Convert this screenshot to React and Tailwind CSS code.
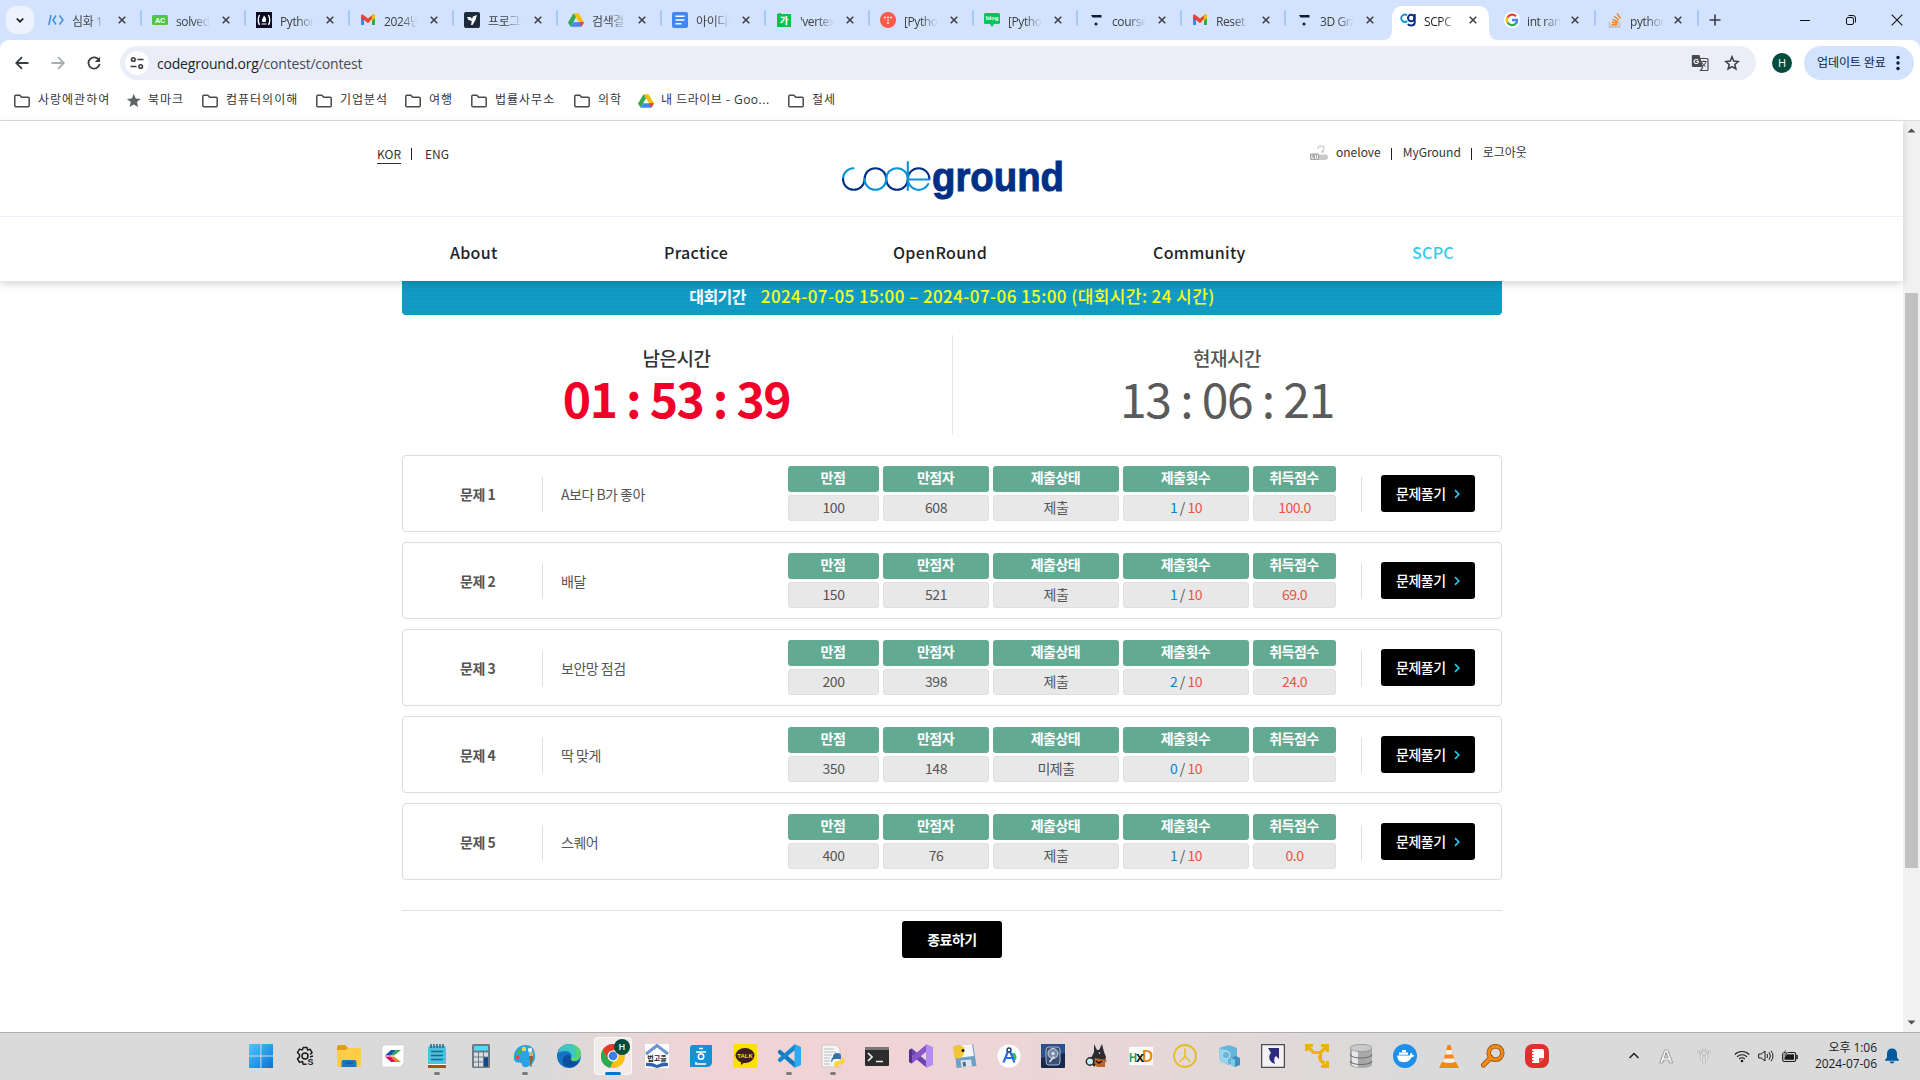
import React from "react";

const UI = "font-['Open_Sans','Noto_Sans_CJK_KR',sans-serif]";

/* ---------- small drawings ---------- */
const Svg = ({ s = 24, vb = "0 0 24 24", children, className = "" }) => (
  <svg width={s} height={s} viewBox={vb} className={"block shrink-0 " + className} fill="none">
    {children}
  </svg>
);

const Gmail = () => (
  <Svg s={16} vb="0 0 16 16">
    <path d="M1 3v10h3V6z" fill="#4285f4" />
    <path d="M15 3v10h-3V6z" fill="#34a853" />
    <path d="M1 3.5V6l3 2.300V4z" fill="#c5221f" />
    <path d="M15 3.500V6l-3 2.300V4z" fill="#fbbc04" />
    <path d="M1 3.500Q1.500 2 3.200 2.800L8 6.500l4.800-3.700Q14.500 2 15 3.500L8 11.200 1 5.500z" fill="#ea4335" />
    <path d="M12 4.500V8.400l3-2.400V3.500Q14.500 2 12.800 2.800L12 3.400z" fill="#fbbc04" />
  </Svg>
);
const Drive = () => (
  <Svg s={16} vb="0 0 16 16">
    <path d="M5.500 1.200h5L16 10.300h-5z" fill="#fbbc04" />
    <path d="M5.500 1.200 0 10.500 2.600 14.800 8 5.300z" fill="#34a853" />
    <path d="M2.600 14.800h10.800L16 10.300H5.200z" fill="#4285f4" />
    <path d="M11 10.300h5l-2.600 4.500z" fill="#ea4335" />
  </Svg>
);
const TDots = () => (
  <Svg s={16} vb="0 0 16 16">
    <path d="M3 3h10.500v2.600H4.500z" fill="#0b1c2c" />
    <circle cx="8" cy="12" r="1.500" fill="#0b1c2c" />
  </Svg>
);
const favicons = {
  code: (
    <Svg s={16} vb="0 0 16 16">
      <path d="M3 3 .800 13M8 3.500 5 8l3 4.500M11.500 3.500 15 8l-3.500 4.500" stroke="#3c91dc" strokeWidth="1.500" />
    </Svg>
  ),
  ac: (
    <Svg s={16} vb="0 0 16 16">
      <rect y="3" width="16" height="10" rx="1.500" fill="#4fc645" />
      <text x="8" y="10.500" fontSize="7" fontWeight="700" fill="#fff" textAnchor="middle" fontFamily="Liberation Sans">AC</text>
    </Svg>
  ),
  fcc: (
    <Svg s={16} vb="0 0 16 16">
      <rect width="16" height="16" fill="#0a0a23" />
      <path d="M3.500 3Q1 8 3.500 13M12.500 3Q15 8 12.500 13" stroke="#fff" strokeWidth="1.400" />
      <path d="M8 3.500c2.500 3 2.500 4.500 1.500 6.500h-3C5.500 8 6.500 7 8 3.500z" fill="#fff" />
      <path d="M5.500 12h5" stroke="#fff" />
    </Svg>
  ),
  gmail: <Gmail />,
  prog: (
    <Svg s={16} vb="0 0 16 16">
      <rect width="16" height="16" rx="2" fill="#1d2a3e" />
      <path d="M3 5h3.500L8 7l1-2.500 4-1.500-1.500 5-3 5H7l.800-4L4.500 8z" fill="#fff" />
    </Svg>
  ),
  drive: <Drive />,
  docs: (
    <Svg s={16} vb="0 0 16 16">
      <rect width="16" height="16" rx="2" fill="#4285f4" />
      <path d="M3.500 4.200h9M3.500 8h9M3.500 11.800h6" stroke="#fff" strokeWidth="1.500" />
    </Svg>
  ),
  ga: (
    <Svg s={16} vb="0 0 16 16">
      <path d="M1 2l3-1 2 1h9v13H1z" fill="#09c14b" />
      <text x="8.200" y="12" fontSize="9" fontWeight="900" fill="#fff" textAnchor="middle" fontFamily="Noto Sans CJK KR">가</text>
    </Svg>
  ),
  tistory: (
    <Svg s={16} vb="0 0 16 16">
      <circle cx="8" cy="8" r="8" fill="#ff5a4a" />
      <g fill="#fff">
        <circle cx="5" cy="5.500" r=".900" /><circle cx="8" cy="5.500" r=".900" /><circle cx="11" cy="5.500" r=".900" />
        <circle cx="8" cy="8.300" r=".900" /><circle cx="8" cy="11" r=".900" />
      </g>
    </Svg>
  ),
  blog: (
    <Svg s={16} vb="0 0 16 16">
      <path d="M1.500 1h13Q16 1 16 2.500v8q0 1.500-1.500 1.500H10l-2 3-2-3H1.500Q0 12 0 10.500v-8Q0 1 1.500 1z" fill="#03c75a" />
      <text x="8" y="8.300" fontSize="6" fontWeight="700" fill="#fff" textAnchor="middle" fontFamily="Liberation Sans">blog</text>
    </Svg>
  ),
  tdots: <TDots />,
  cg: (
    <Svg s={16} vb="0 0 16 16">
      <path d="M7 3.300A3.600 3.600 0 1 0 7.200 9" stroke="#0a94d8" strokeWidth="1.800" />
      <circle cx="11.200" cy="6" r="3.200" stroke="#0b2f86" strokeWidth="2" />
      <path d="M14.700 2v8.500q0 3-3.500 3-2.500 0-3.200-1.500" stroke="#0b2f86" strokeWidth="2" />
    </Svg>
  ),
  google: (
    <Svg s={16} vb="0 0 16 16">
      <circle cx="8" cy="8" r="8" fill="#fff" />
      <g strokeWidth="2.300">
        <path d="M12 4.300A5.200 5.200 0 0 0 3.600 5.500" stroke="#ea4335" />
        <path d="M3.600 5.300a5.200 5.200 0 0 0 0 5.300" stroke="#fbbc04" />
        <path d="M3.600 10.500A5.200 5.200 0 0 0 11.500 12" stroke="#34a853" />
        <path d="M8 8h5.100A5 5 0 0 1 11.300 12.100" stroke="#4285f4" />
      </g>
    </Svg>
  ),
  so: (
    <Svg s={16} vb="0 0 16 16">
      <path d="M2.500 10v5h10v-5" stroke="#bcbbbb" strokeWidth="1.400" />
      <path d="M4.500 12.800h6M4.700 10.300l6 1M5.500 7.400l5.500 2.600M7.300 4.300l4.500 4M10.200 1.500l3.200 5" stroke="#f48024" strokeWidth="1.400" />
    </Svg>
  ),
};

const tabs = [
  ["code", "심화 1"], ["ac", "solved.ac"], ["fcc", "Python"], ["gmail", "2024년"],
  ["prog", "프로그래"], ["drive", "검색결과"], ["docs", "아이디어"], ["ga", "'vertex"],
  ["tistory", "[Python"], ["blog", "[Python"], ["tdots", "course"], ["gmail", "Reset"],
  ["tdots", "3D Gra"], ["cg", "SCPC"], ["google", "int ran"], ["so", "python"],
];

const Close = () => (
  <Svg s={8} vb="0 0 8 8"><path d="M.700.700l6.600 6.600M7.300.700.700 7.300" stroke="#3a3d42" strokeWidth="1.500" /></Svg>
);

function Tab({ icon, title, active, sep, last }) {
  return (
    <div className={"relative flex h-[34px] shrink-0 items-center " + (last ? "w-[103px]" : "w-[104px]")}>
      {active && (
        <>
          <div className="absolute inset-y-0 left-[2px] w-[97px] rounded-t-[10px] bg-white" />
          <Svg s={10} vb="0 0 10 10" className="absolute bottom-0 -left-[8px]"><path d="M10 0v10H0Q10 10 10 0z" fill="#fff" /></Svg>
          <Svg s={10} vb="0 0 10 10" className="absolute bottom-0 left-[99px]"><path d="M0 0v10h10Q0 10 0 0z" fill="#fff" /></Svg>
        </>
      )}
      <div className="relative flex w-full items-center pb-[6px]">
        <span className="ml-[10px]">{favicons[icon]}</span>
        <span
          className={
            "mt-px h-[18px] w-[34px] overflow-hidden whitespace-nowrap text-[12px] leading-[20px] tracking-[-0.400px] [mask-image:linear-gradient(to_right,black_50%,transparent)] " +
            (last ? "ml-[7px] " : "ml-2 ") +
            (active ? "text-[#1f1f1f]" : "text-[#3c4043]")
          }
        >
          {title}
        </span>
        <span className={last ? "ml-[10px]" : active ? "ml-[11px]" : "ml-3"}><Close /></span>
        {sep && <span className={"absolute top-[-1px] h-4 w-[2px] rounded bg-[#a8c7fa] " + (last ? "left-[100px]" : "left-[102px]")} />}
      </div>
    </div>
  );
}

const Folder = () => (
  <Svg s={16} vb="0 0 16 16">
    <path d="M.800 3.300q0-1 1-1h4l1.800 2h6.600q1 0 1 1v7.400q0 1-1 1H1.800q-1 0-1-1z" stroke="#474a4e" strokeWidth="1.500" />
  </Svg>
);
const Star = () => (
  <Svg s={16} vb="0 0 16 16">
    <path d="M8.800.800l1.900 4.700 5 .400-3.800 3.200 1.200 4.900-4.300-2.600L4.500 14l1.200-4.900-3.800-3.200 5-.400z" fill="#5f6368" />
  </Svg>
);
const bookmarks = [
  ["f", "사랑에관하여", "w-[111px]"], ["s", "북마크", "w-[77px]"], ["f", "컴퓨터의이해", "w-[114px]"],
  ["f", "기업분석", "w-[89px]"], ["f", "여행", "w-[66px]"], ["f", "법률사무소", "w-[103px]"],
  ["f", "의학", "w-[64px]"], ["d", "내 드라이브 - Goo...", "w-[150px]"], ["f", "절세", "w-[60px]"],
];

function Browser() {
  return (
    <div className={UI}>
      <div className="flex h-10 items-start bg-[#d3e2fd] pt-[6px]">
        <div className="ml-[6px] flex h-7 w-7 items-center justify-center rounded-[10px] bg-[#ecf3fe]">
          <Svg s={8} vb="0 0 8 8"><path d="M.700 2.500 4 5.700l3.300-3.200" stroke="#1f1f1f" strokeWidth="1.700" /></Svg>
        </div>
        <div className="ml-1 flex">
          {tabs.map(([i, t], n) => (
            <Tab key={n} icon={i} title={t} active={n === 13} sep={n !== 12 && n !== 13} last={n > 13} />
          ))}
        </div>
        <div className="ml-[7px] flex h-7 items-center">
          <Svg s={12} vb="0 0 12 12" className="ml-[2px]"><path d="M6 .500v11M.500 6h11" stroke="#3a3d42" strokeWidth="1.600" /></Svg>
        </div>
        <div className="ml-auto flex h-7 items-center">
          <Svg s={10} vb="0 0 10 10"><path d="M0 5.500h10" stroke="#111" /></Svg>
          <Svg s={10} vb="0 0 10 10" className="ml-9"><rect x=".500" y="2.500" width="7" height="7" rx="1.500" stroke="#111" /><path d="M2.500.500H7Q9.500.500 9.500 3v4.500" stroke="#111" /></Svg>
          <Svg s={12} vb="0 0 12 12" className="ml-[35px] mr-[17px]"><path d="M.700.700l10.600 10.600M11.300.700.700 11.300" stroke="#111" strokeWidth="1.100" /></Svg>
        </div>
      </div>
      <div className="bg-[#d3e2fd]">
        <div className="flex h-[42px] items-center rounded-t-[9px] bg-white pt-[4px]">
          <div className="flex w-[120px] shrink-0 items-center pl-[15px]">
            <Svg s={14} vb="0 0 14 14"><path d="M13.500 7H1.500M7 1.200 1.200 7 7 12.800" stroke="#3a3d42" strokeWidth="1.800" /></Svg>
            <Svg s={14} vb="0 0 14 14" className="ml-[22px]"><path d="M.500 7h12M7 1.200 12.800 7 7 12.800" stroke="#a9acb0" strokeWidth="1.800" /></Svg>
            <Svg s={14} vb="0 0 14 14" className="ml-[22px]"><path d="M12 4.300A5.600 5.600 0 1 0 12.600 8" stroke="#3a3d42" strokeWidth="1.800" /><path d="M13 .800V6H7.800z" fill="#3a3d42" /></Svg>
          </div>
          <div className="flex h-[34px] w-[1636px] shrink-0 items-center rounded-full bg-[#ebeef8] pl-[5px]">
            <div className="flex h-6 w-6 items-center justify-center rounded-full bg-white">
              <Svg s={14} vb="0 0 14 14">
                <g stroke="#3a3d42" strokeWidth="1.600"><circle cx="3.300" cy="3.500" r="1.800" /><path d="M7.500 3.500h6M.500 10.500h6" /><circle cx="10.700" cy="10.500" r="1.800" /></g>
              </Svg>
            </div>
            <span className="ml-2 text-[14px] tracking-[-0.200px] text-[#1f1f1f]">codeground.org<span className="text-[#474a50]">/contest/contest</span></span>
            <Svg s={18} vb="0 0 18 18" className="ml-auto">
              <path d="M1.500 1h7l3.500 12H2q-1.200 0-1.200-1.200V2Q.800 1 1.500 1z" fill="#474a4e" />
              <path d="M8.500 4.500H16q1 0 1 1v10q0 1-1 1H9.500L12 13" stroke="#474a4e" strokeWidth="1.200" />
              <text x="2.300" y="9.500" fontSize="7.500" fontWeight="700" fill="#fff" fontFamily="Liberation Sans">G</text>
              <path d="M10 7.500h5.500M12.800 6.500v1M15 7.500q-1 4-4 5M11 8.500q1 2.500 3.500 4" stroke="#474a4e" />
            </Svg>
            <Svg s={16} vb="0 0 16 16" className="ml-[15px] mr-4">
              <path d="M8 1.800l1.700 4.300 4.600.400-3.500 3 1.100 4.500L8 11.600 4.100 14l1.100-4.500-3.500-3 4.600-.400z" stroke="#3a3d42" strokeWidth="1.500" />
            </Svg>
          </div>
          <div className="ml-4 flex h-5 w-5 items-center justify-center rounded-full bg-[#004d40] text-[11px] text-white">H</div>
          <div className="ml-3 flex h-[34px] w-[110px] items-center rounded-full bg-[#d3e2fd] pl-[13px] text-[12px] tracking-[-0.100px] whitespace-nowrap text-[#041e49]">
            <span className="w-[72px]">업데이트 완료</span>
            <Svg s={18} vb="0 0 18 18"><g fill="#041e49"><circle cx="9" cy="3.500" r="1.700" /><circle cx="9" cy="9" r="1.700" /><circle cx="9" cy="14.500" r="1.700" /></g></Svg>
          </div>
        </div>
      </div>
      <div className="flex h-[39px] items-center border-b border-[#dcdee1] bg-white pl-[14px] text-[12px] text-[#33363a]">
        {bookmarks.map(([k, t, w], i) => (
          <div key={i} className={"flex shrink-0 items-center gap-2 whitespace-nowrap " + w}>
            <span>{k === "f" ? <Folder /> : k === "s" ? <Star /> : <Drive />}</span>
            <span className={"-mt-[3px] " + (k === "d" ? "-ml-px tracking-[0.500px]" : k === "s" ? "-ml-px tracking-[1px]" : "tracking-[1px]")}>{t}</span>
          </div>
        ))}
      </div>
    </div>
  );
}

/* ---------- site ---------- */
const Logo = () => (
  <svg width="236" height="50" viewBox="0 0 236 50" fill="none" className="block">
    <g strokeWidth="2.100" strokeLinecap="round">
      <path d="M17.500 14.200A10.800 10.800 0 0 0 7 25" stroke="#0a94d8" />
      <path d="M7 25a10.800 10.800 0 0 0 21.600 0a10.800 10.800 0 0 1 21.600 0a10.800 10.800 0 0 0 21.600 0a10.800 10.800 0 0 1 21.600 0" stroke="#002f86" />
      <path d="M28.600 25a10.800 10.800 0 0 0 21.600 0a10.800 10.800 0 0 1 21.600 0a10.800 10.800 0 0 0 20.400 5M71.800 8v28M72 25.500h21.500" stroke="#0a94d8" />
    </g>
    <text x="96" y="36.500" fontFamily="Liberation Sans" fontSize="41" fontWeight="700" fill="#002f86" stroke="#002f86" strokeWidth="1" textLength="132" lengthAdjust="spacingAndGlyphs">ground</text>
  </svg>
);

const Bar = ({ className }) => <span className={"h-3 w-px bg-[#222] " + className} />;

function Header() {
  return (
    <div className="relative z-10 h-[160px] bg-white shadow-[0_3px_8px_rgba(0,0,0,0.16)]">
      <div className="flex h-[96px] border-b border-[#eaf1fa] text-[12px] text-[#333]">
        <div className="flex w-[459px] items-start pt-[23px] pl-[377px]">
          <span className="h-[20px] border-b border-[#333] leading-[20px]">KOR</span>
          <Bar className="mt-1 ml-[10px]" />
          <span className="ml-[13px] leading-[20px]">ENG</span>
        </div>
        <div className="ml-[377px] pt-[33px]"><Logo /></div>
        <div className="ml-[238px] flex items-start pt-[21px] leading-[20px]">
          <Svg s={18} vb="0 0 18 18" className="mt-[3px]">
            <path d="M8 4q0-3 3-3t3 2.500q0 2-3 3.500h3" stroke="#d0d0d0" strokeWidth="1.400" />
            <path d="M7 9.500h9q2 0 2 2.500 0 3-3 3H8z" fill="#c9c9c9" />
            <rect y="8.500" width="9" height="6.500" rx="1" fill="#a8a8a8" />
            <path d="M1.800 10v3.300h2M5.500 10v3.300h2V10" stroke="#fff" strokeWidth=".900" />
          </Svg>
          <span className="ml-[8px]">onelove</span>
          <Bar className="mt-[6px] ml-[10px]" />
          <span className="ml-[11px]">MyGround</span>
          <Bar className="mt-[6px] ml-[10px]" />
          <span className="ml-[11px] tracking-[-0.100px]">로그아웃</span>
        </div>
      </div>
      <div className="flex h-[64px] items-center pt-[6px] pl-[450px] text-[16px] leading-6 font-medium tracking-[0.300px] text-[#222]">
        <span className="w-[214px]">About</span>
        <span className="w-[229px]">Practice</span>
        <span className="w-[260px]">OpenRound</span>
        <span className="w-[259px]">Community</span>
        <span className="text-[#30cdf0]">SCPC</span>
      </div>
    </div>
  );
}

const problems = [
  ["문제 1", "A보다 B가 좋아", "100", "608", "제출", "1", "100.0"],
  ["문제 2", "배달", "150", "521", "제출", "1", "69.0"],
  ["문제 3", "보안망 점검", "200", "398", "제출", "2", "24.0"],
  ["문제 4", "딱 맞게", "350", "148", "미제출", "0", ""],
  ["문제 5", "스퀘어", "400", "76", "제출", "1", "0.0"],
];

function Cell({ w, head, children, tone = "text-[#555]" }) {
  return (
    <div className={"flex shrink-0 flex-col gap-[3px] text-center " + w}>
      <div className="h-[26px] rounded-[3px] bg-[#63aa92] pr-px leading-[22px] font-bold text-white">{head}</div>
      <div className={"h-[26px] rounded-[3px] border border-[#dfdfdf] bg-[#e8e8e8] leading-[22px] " + tone}>{children}</div>
    </div>
  );
}

function Problem({ p }) {
  return (
    <div className="flex h-[77px] items-center rounded-[4px] border border-[#dcdcdc] text-[14px] tracking-[-0.500px] text-[#555]">
      <span className="w-[139px] pt-px pl-[57px] font-bold whitespace-nowrap">{p[0]}</span>
      <span className="mt-px h-[35px] w-px bg-[#ddd]" />
      <span className="w-[245px] pt-px pl-[18px]">{p[1]}</span>
      <div className="flex gap-1">
        <Cell w="w-[91px]" head="만점">{p[2]}</Cell>
        <Cell w="w-[106px]" head="만점자">{p[3]}</Cell>
        <Cell w="w-[126px]" head="제출상태">{p[4]}</Cell>
        <Cell w="w-[126px]" head="제출횟수">
          <span className="text-[#0a83d0]">{p[5]}</span> / <span className="text-[#ee5340]">10</span>
        </Cell>
        <Cell w="w-[83px]" head="취득점수" tone="text-[#ee5340]">{p[6]}</Cell>
      </div>
      <span className="mt-px ml-[25px] h-[35px] w-px bg-[#ddd]" />
      <div className="ml-[19px] flex h-[37px] w-[94px] items-center rounded-[3px] bg-black pl-[15px] text-white">
        <span className="w-[56px] font-medium">문제풀기</span>
        <Svg s={10} vb="0 0 10 10"><path d="M3 1.200 6.800 5 3 8.800" stroke="#2cc3e8" strokeWidth="1.700" /></Svg>
      </div>
    </div>
  );
}

function Site() {
  return (
    <div className="flex h-[911px] bg-white">
      <div className="w-[1903px] font-['Noto_Sans_CJK_KR',sans-serif]">
        <Header />
        <div className="ml-[402px] w-[1100px]">
          <div className="flex h-[34px] items-center justify-center rounded-b-[4px] bg-[#119cc6] bg-[radial-gradient(#0f95bf_0.700px,transparent_0.900px)] bg-[size:4px_4px] pb-[4px]">
            <span className="text-[16px] font-bold tracking-[-0.600px] text-white">대회기간</span>
            <span className="ml-[15px] text-[17px] font-medium tracking-[0.420px] text-[#faff14]">2024-07-05 15:00 – 2024-07-06 15:00 (대회시간: 24 시간)</span>
          </div>
          <div className="mt-[20px] flex h-[100px] text-center">
            <div className="w-[551px] border-r border-[#e6e6e6] pt-[9px] pr-px">
              <div className="text-[19px] leading-[28px] font-medium tracking-[-0.500px] text-[#333]">남은시간</div>
              <div className="text-[48px] leading-[50px] font-bold tracking-[-1.450px] text-[#f00028]">01 : 53 : 39</div>
            </div>
            <div className="w-[549px] pt-[9px] pr-px">
              <div className="text-[19px] leading-[28px] font-medium tracking-[-0.500px] text-[#555]">현재시간</div>
              <div className="text-[48px] leading-[50px] font-normal tracking-[-1.300px] text-[#5a5a5a]">13 : 06 : 21</div>
            </div>
          </div>
          <div className="mt-[20px] flex flex-col gap-[10px]">
            {problems.map((p) => <Problem key={p[0]} p={p} />)}
          </div>
          <div className="mt-[30px] flex justify-center border-t border-[#e2e2e2] pt-[10px]">
            <div className="flex h-[37px] w-[100px] items-center justify-center rounded-[3px] bg-black text-[14px] font-bold tracking-[-0.500px] text-white">종료하기</div>
          </div>
        </div>
      </div>
      <div className="flex w-[17px] flex-col items-center bg-[#f1f1f1]">
        <Svg s={9} vb="0 0 9 9" className="mt-[5px]"><path d="M.500 6.500h8L4.500 2.500z" fill="#505050" /></Svg>
        <div className="mt-[158px] h-[575px] w-[13px] bg-[#c1c1c1]" />
        <Svg s={9} vb="0 0 9 9" className="mt-auto mb-[5px]"><path d="M.500 2.500h8l-4 4z" fill="#505050" /></Svg>
      </div>
    </div>
  );
}

/* ---------- taskbar ---------- */
const apps = [
  <Svg><path d="M0 0h11.400v11.400H0zM12.400 0H24v11.400H12.400zM0 12.400h11.400V24H0zM12.400 12.400H24V24H12.400z" fill="url(#win)" /><defs><linearGradient id="win" x1="0" y1="0" x2="1" y2="1"><stop stopColor="#4cc8fb" /><stop offset="1" stopColor="#0a72d4" /></linearGradient></defs></Svg>,
  <Svg>
    <path d="M10 3.500h4l.6 2.600 2.500-.8 2 3.300-1.900 1.900M9.500 6l-3-.900-2 3.500 2 2.100v2.200l-2 2 2 3.500 3-.900.600 2.700h3.500M10 3.500 9.500 6M17 13l3-1" stroke="#1d1d1d" strokeWidth="1.500" strokeLinejoin="round" />
    <circle cx="12" cy="12" r="3" stroke="#1d1d1d" strokeWidth="1.500" />
    <text x="14.500" y="21" fontSize="9" fontWeight="700" fill="#1d1d1d" fontFamily="Liberation Sans">S</text>
  </Svg>,
  <Svg><path d="M0 3q0-2 2-2h6l3 3h11v4H0z" fill="#e09f12" /><path d="M0 7q0-1 1-1h8l2-2h12q1 0 1 1v16q0 2-2 2H2q-2 0-2-2z" fill="#ffcd48" /><path d="M4.500 23v-5q0-2 2-2h11q2 0 2 2v5z" fill="#1b76c8" /><path d="M8 19h8" stroke="#0f5da6" strokeWidth="1.500" /></Svg>,
  <Svg><path d="M4 1h19v16q-1 6-6 6H1V4q0-3 3-3z" fill="#fff" stroke="#ccc" strokeWidth=".700" /><path d="M4 11.500 10 6h5l-5 5.500z" fill="#1a4fae" /><path d="M13 11.500 20 6h-5l-5 5.500z" fill="#2cab57" /><path d="M4 12.500 10 18h5l-5-5.500z" fill="#e11060" /><path d="M10 12.500l5 5.500h5l-7-5.500z" fill="#f47f28" /></Svg>,
  <Svg><rect x="3" y="2" width="18" height="20" rx="1.500" fill="#4fc1e0" /><path d="M6 0v4M9 0v4M12 0v4M15 0v4M18 0v4" stroke="#17556e" strokeWidth="1.300" /><path d="M6 7.500h12M6 11.500h12M6 15.500h12" stroke="#146a8a" strokeWidth="1.600" /><path d="M3 21h18v3H3z" fill="#a5521b" /><path d="M3 20.500h18" stroke="#fff" /></Svg>,
  <Svg><rect x="3" width="18" height="24" rx="1.500" fill="#6f7a85" /><rect x="5" y="2" width="14" height="4.500" fill="#4fdcf6" /><path d="M5 8.500h4v4H5zM10 8.500h4v4h-4zM15 8.500h4v4h-4zM5 13.500h4v4H5zM10 13.500h4v4h-4zM5 18.500h4v4H5zM10 18.500h4v4h-4z" fill="#d6dde3" /><path d="M15 13.500h4v9h-4z" fill="#0e4a94" /></Svg>,
  <Svg><path d="M13 1C4 1 0 8 1 15c1 5 5 3 7 4s0 5 6 4c6-2 9-7 8-13S18 1 13 1z" fill="#29a4e2" /><circle cx="6" cy="8" r="2.200" fill="#3fb950" /><circle cx="11" cy="5" r="2.200" fill="#ffce45" /><circle cx="17" cy="6" r="2.200" fill="#efefef" /><circle cx="4.500" cy="13.500" r="2" fill="#e64a32" /><path d="M16 8h4v8h-1l-.500 7h-1l-.500-7h-1z" fill="#9a622b" /><path d="M16 8h4v4h-4z" fill="#d6b07a" /></Svg>,
  <Svg><circle cx="12" cy="12" r="12" fill="#1373c8" /><path d="M1 9C3 3 7 0 12 0c7 0 12 5 12 10 0 4-3 7-7 7-3 0-4-2-3-3 2-3-1-7-6-7-3 0-6 1-7 2z" fill="#3ec8c0" /><path d="M14 .200C20 1 24 5 24 10c0 4-3 7-7 7-3 0-4-2-3-3 8 0 7-9 0-13.800z" fill="#58d46c" /><path d="M14 14c-1 2 1 5 8 3-3 6-9 8-14 5-4-3-3-9 2-11 2-1 4 1 4 3z" fill="#0c4f9b" /></Svg>,
  <div className="relative flex h-[38px] w-[38px] items-center justify-center rounded-[4px] border border-white/60 bg-white/50">
    <Svg><circle cx="12" cy="12" r="12" fill="#fbc116" /><path d="M1.600 6A12 12 0 0 1 22.400 6H12L6.500 15z" fill="#e33b2e" /><path d="M1.600 6 7 15l5 3-3 6A12 12 0 0 1 1.600 6z" fill="#2da94f" /><circle cx="12" cy="12" r="5.500" fill="#fff" /><circle cx="12" cy="12" r="4.400" fill="#3f7de8" /></Svg>
    <div className="absolute top-px right-px flex h-4 w-4 items-center justify-center rounded-full bg-[#004d40] text-[9px] font-semibold text-white">H</div>
  </div>,
  <Svg><rect width="24" height="24" fill="#fff" /><path d="M1 10 12 1.500 23 10" stroke="#6c93cc" strokeWidth="3" /><text x="12" y="16.500" fontSize="7" fontWeight="700" fill="#222" textAnchor="middle" fontFamily="Noto Sans CJK KR">법고을</text><path d="M1 19q6-1 11 2 5-3 11-2v3q-6 0-11 2-5-2-11-2z" fill="#2f60ae" /></Svg>,
  <Svg><path d="M4 1h18q1 0 1 1v17q-1 4-5 4H1V4q0-3 3-3z" fill="#1592d6" /><path d="M10 4.500h4M7 8h10M7 18v2h10" stroke="#fff" strokeWidth="1.600" /><circle cx="12" cy="12.500" r="2.700" stroke="#fff" strokeWidth="1.600" /></Svg>,
  <Svg><rect width="24" height="24" rx="2" fill="#fae100" /><ellipse cx="12" cy="11.500" rx="9.500" ry="7.500" fill="#3b1e1e" /><path d="M8 17v4l4-3z" fill="#3b1e1e" /><text x="12" y="14" fontSize="6" fontWeight="700" fill="#fae100" textAnchor="middle" fontFamily="Liberation Sans">TALK</text></Svg>,
  <Svg><path d="M1 7l2-1.500L18 18v6L1 9z" fill="#0c79c4" /><path d="M1 16.500 3 18.500 18 6V0L1 15z" fill="#1487d0" /><path d="M17.500 0 24 3v18l-6.500 3z" fill="#2ea8ee" /></Svg>,
  <Svg><path d="M1 1h14l4 4v18H1z" fill="#f5f5f5" stroke="#c8c8c8" /><path d="M3 5h10M3 8h12M3 11h8M3 14h6M3 17h6M3 20h6" stroke="#bbb" /><path d="M12 13q0-4 4-4t4 3v3h-6q-3 0-3 4-2-3 1-6z" fill="#3572a5" /><path d="M23 14q2 6-2 6h-3v3q-5 1-5-2 0-4 4-4 5 0 4-4z" fill="#ffd43b" /></Svg>,
  <Svg><rect y="3" width="24" height="19" rx="1" fill="#2c2c2c" /><path d="M0 3h24v3H0z" fill="#777" /><path d="M3 9l4 4-4 4M11 17.500h7" stroke="#eee" strokeWidth="1.700" /></Svg>,
  <Svg><path d="M0 6l3-1.500 15 13V24L0 9z" fill="#6a44b0" /><path d="M0 18l3 1.500L18 7V0L0 15z" fill="#8658cc" /><path d="M0 6l3-1.500v15L0 18z" fill="#52308f" /><path d="M17 0l7 3v18l-7 3z" fill="#b38cf0" /></Svg>,
  <Svg><path d="M1.500 2 20 0l3.500 22-20 2z" fill="#6f9fc6" /><path d="M7 1.500 19 0l1.800 12-13 1.500z" fill="#f5f5f5" /><path d="M7.500 16.500 18 15.500l1 7-10.500 1z" fill="#dde4ea" /><path d="M9.500 18l3-.300.600 4.500-3 .300z" fill="#4c6f94" /><path d="M0 3q7-4 11.500 1l-1 7-4 3.500-5-.500z" fill="#f4c534" /><circle cx="10" cy="6.500" r="1.500" fill="#111" /></Svg>,
  <Svg><circle cx="12" cy="12" r="11.500" fill="#fff" /><path d="M14.500 9h3q3 3 1.500 7l-3-1z" fill="#2cc26b" /><path d="M11.500 6 6.500 18.500M12.500 6l5 12.500M8.500 14h7" stroke="#2f6fe0" strokeWidth="2.200" /><circle cx="12" cy="6" r="2" stroke="#173f80" strokeWidth="1.400" fill="#fff" /></Svg>,
  <Svg><rect width="24" height="24" rx="1" fill="#15294d" /><path d="M0 0h24v9L0 14z" fill="#2a518e" /><rect x="5" y="3" width="14" height="18" rx="3" fill="#3a4f72" stroke="#aab8cc" strokeWidth="1" /><circle cx="12" cy="9.500" r="5" fill="#7c8ca4" stroke="#cdd6e2" /><circle cx="12" cy="9.500" r="1.500" fill="#e8eef5" /><path d="M13 12.500 8.500 18" stroke="#dde5ee" strokeWidth="1.600" /></Svg>,
  <Svg><path d="M9 0l3 6 2 0 3-6 2 8 2 5-2 8H9L6 14l3-6z" fill="#2b2c33" /><path d="M10 14l5 1 7 1-2 3v4h-8l-3-4z" fill="#bd6426" /><circle cx="14.500" cy="9" r=".800" fill="#fff" /><path d="M11 17l3 2 3-2" stroke="#111" strokeWidth="1.500" /><circle cx="5" cy="17.500" r="3.700" fill="#c7eaf8" stroke="#222" strokeWidth="1.400" /><path d="M8 20l2 2" stroke="#222" strokeWidth="2" /></Svg>,
  <Svg><rect y="3" width="24" height="18" fill="#fff" /><g fontFamily="Liberation Sans" fontWeight="700"><text x="0" y="17.500" fontSize="13" fill="#2f9b59" textLength="8" lengthAdjust="spacingAndGlyphs">H</text><text x="13" y="18" fontSize="17" fill="#ee8420" textLength="11" lengthAdjust="spacingAndGlyphs">D</text><text x="7" y="17.500" fontSize="14" fill="#111" textLength="8" lengthAdjust="spacingAndGlyphs">x</text></g></Svg>,
  <Svg><circle cx="12" cy="12" r="11" stroke="#e4bd24" strokeWidth="1.800" /><path d="M12 4.500v8L6.500 18M12 12.500l5.500 5.500" stroke="#e4bd24" strokeWidth="1.500" /></Svg>,
  <Svg><path d="M2 4 12 1l8 3v13l-8 4-9-4z" fill="#65b5d8" /><path d="M2 4l9 3v14l-8-4z" fill="#91d2ec" /><circle cx="9" cy="11" r="4" fill="#6db7d6" stroke="#b9e8f9" /><path d="M14 14l5-2 4 2v7l-5 2-4-2z" fill="#3f8fc0" /><path d="M14 14l4 1.500V23l-4-2z" fill="#7fc8e6" /></Svg>,
  <Svg><rect x=".500" y=".500" width="23" height="23" fill="#f3f3f6" stroke="#4a4a52" strokeWidth="1.500" /><path d="M7 4h11v11l-3-3q-3 2-1 8-8-3-5-10l1-1z" fill="#2d2b80" /></Svg>,
  <Svg><path d="M1.500 7V1.500H8M16 1.500h6.500V8M22.500 17v5.500H16M2 2l6.500 6.500h7V16l6 6M22 2l-6.500 6.500M13 13.500h2.500" stroke="#eab30c" strokeWidth="3.200" /></Svg>,
  <Svg><path d="M1 4v16q0 4 11 4t11-4V4z" fill="#a9a9a9" /><path d="M3 5v16q2 2 6 2V7z" fill="#e8e8e8" /><ellipse cx="12" cy="4" rx="11" ry="3.700" fill="#c9c9c9" stroke="#8d8d8d" strokeWidth=".700" /><path d="M1 10.500q2 3.500 11 3.500t11-3.500M1 17q2 3.500 11 3.500T23 17" stroke="#6d6d6d" strokeWidth="1.200" /></Svg>,
  <Svg><circle cx="12" cy="12" r="12" fill="#1d90ed" /><path d="M4 11.500h13q0-2 1-3 1.500 1 1.500 2.500l2 .200q-.800 2-3 2-2 5-8 5-6 0-6.500-6.700z" fill="#fff" /><path d="M6 8.500h9v2.300H6zM9 6h4v2.300H9z" fill="#fff" /></Svg>,
  <Svg><path d="M5 18h14l3 6H2z" fill="#f28a0c" /><path d="M10.500 1h3l5 19q-6.500 3-13 0z" fill="#f7870f" /><path d="M9.300 6h5.400l1.200 4.500H8.100zM7 14.500h10l1 3.500q-6 2-12 0z" fill="#f1f1f1" /></Svg>,
  <Svg><circle cx="14.500" cy="9" r="6.800" stroke="#8a4a10" strokeWidth="4.500" /><path d="M10 13.500 2.500 21" stroke="#8a4a10" strokeWidth="5" strokeLinecap="round" /><circle cx="14.500" cy="9" r="6.800" stroke="#f38a12" strokeWidth="3" /><path d="M10 13.500 2.500 21" stroke="#f38a12" strokeWidth="3.500" strokeLinecap="round" /></Svg>,
  <Svg><rect width="24" height="24" rx="8" fill="#e0302c" /><path d="M7 5h10q2 0 2 2v7l-5 5H7z" fill="#fff" /><path d="M14 19v-5h5z" fill="#e5524e" /><path d="M5.500 7.500h3M5.500 10.500h3M5.500 13.500h3M5.500 16.500h3" stroke="#e0302c" strokeWidth="1" /></Svg>,
];
const running = [4, 6, 12, 13];

function Taskbar() {
  return (
    <div className={"flex h-12 border-t-[1px] border-[#adadb0] bg-[linear-gradient(to_right,#dadada_0,#dadada_540px,#f0d4d5_700px,#f0d4d5_920px,#dfd9d9_1300px,#dadada_1420px)] " + UI}>
      <div className="ml-[239px] flex">
        {apps.map((a, i) => (
          <div key={i} className="relative flex h-[45px] w-11 shrink-0 items-center justify-center">
            {a}
            {running.includes(i) && <span className="absolute bottom-[3px] h-[3px] w-[6px] rounded-full bg-[#7c7c7c]" />}
            {i === 8 && <span className="absolute bottom-[3px] h-[3px] w-4 rounded-full bg-[#0078d4]" />}
          </div>
        ))}
      </div>
      <div className="ml-auto flex h-[45px] items-center text-[#1b1b1b]">
        <Svg s={10} vb="0 0 10 10"><path d="M.500 7 5 2.500 9.500 7" stroke="#1b1b1b" strokeWidth="1.400" /></Svg>
        <Svg s={18} vb="0 0 18 18" className="ml-[18px]"><text x="9" y="16" fontSize="19" textAnchor="middle" fill="#fff" stroke="#777" strokeWidth=".700" fontWeight="700" fontFamily="Liberation Sans">A</text></Svg>
        <Svg s={18} vb="0 0 18 18" className="ml-5"><g stroke="#999" strokeWidth="2.600"><path d="M9 1v3M2 5h14M9 13v4" /><circle cx="9" cy="9.500" r="3" /></g><g stroke="#fff" strokeWidth="1.200"><path d="M9 1v3M2 5h14M9 13v4" /><circle cx="9" cy="9.500" r="3" /></g></Svg>
        <Svg s={16} vb="0 0 16 16" className="ml-[21px]"><path d="M.800 6.500a10.200 10.200 0 0 1 14.400 0M3 8.800a7 7 0 0 1 10 0M5.200 11a4 4 0 0 1 5.600 0" stroke="#1b1b1b" strokeWidth="1.100" /><circle cx="8" cy="13" r="1.300" fill="#1b1b1b" /></Svg>
        <Svg s={16} vb="0 0 16 16" className="ml-2"><path d="M.700 6v4h2.500L7 13V3L3.200 6zM9 6q1.500 2 0 4M11 4.300q3 3.700 0 7.400M13 2.800q4 5.200 0 10.400" stroke="#1b1b1b" /></Svg>
        <Svg s={16} vb="0 0 16 16" className="ml-2"><rect x=".700" y="4.500" width="13" height="9" rx="1.800" stroke="#1b1b1b" strokeWidth="1.200" /><rect x="2.500" y="6.300" width="9.500" height="5.500" fill="#1b1b1b" /><path d="M15 7v4" stroke="#1b1b1b" strokeWidth="1.500" /><path d="M4 1 1 5.500h2.500L2.500 9 6 4.500H3.500z" fill="#1b1b1b" stroke="#dadada" strokeWidth=".500" /></Svg>
        <div className="ml-[15px] w-[64px] text-right text-[12px] leading-4 tracking-[-0.050px] whitespace-nowrap">
          <div>오후 1:06</div>
          <div>2024-07-06</div>
        </div>
        <Svg s={16} vb="0 0 16 16" className="ml-[7px] mr-5"><path d="M8 .500q5 0 5 5.500v3.500l2 2.500v.800H1V12l2-2.500V6Q3 .500 8 .500zM5.500 13.500h5q-.500 2-2.500 2t-2.500-2z" fill="#005a9e" /></Svg>
      </div>
    </div>
  );
}

export default function App() {
  return (
    <div className="h-[1080px] w-[1920px] overflow-hidden bg-white">
      <Browser />
      <Site />
      <Taskbar />
    </div>
  );
}
